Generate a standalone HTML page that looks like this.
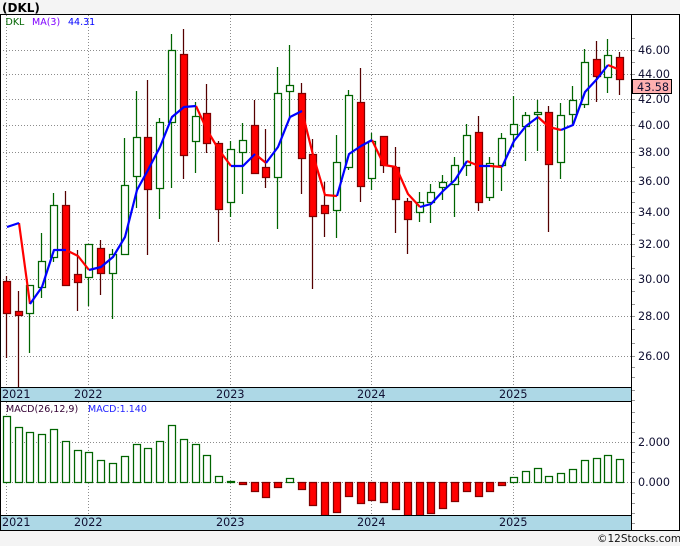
<!DOCTYPE html>
<html><head><meta charset="utf-8"><style>
html,body{margin:0;padding:0;background:#f4f4f4}
svg{display:block}
text{font-family:"DejaVu Sans",sans-serif;font-size:11.2px;fill:#111133}
</style></head><body>
<svg width="680" height="546" viewBox="0 0 680 546" xmlns="http://www.w3.org/2000/svg">
<rect width="680" height="546" fill="#f4f4f4"/>
<rect x="0" y="14" width="680" height="517" fill="#fff"/>
<text x="2" y="12" style="font-weight:bold;font-size:12px;fill:#000">(DKL)</text>
<path shape-rendering="crispEdges" fill="none" stroke="#8c8c8c" stroke-dasharray="1 2" d="M0 50.5H631M0 74.5H631M0 99.5H631M0 125.5H631M0 152.5H631M0 181.5H631M0 212.5H631M0 244.5H631M0 279.5H631M0 316.5H631M0 356.5H631M6.5 15V387M88.5 15V387M230.5 15V387M371.5 15V387M513.5 15V387M0 442.5H631M0 482.5H631M6.5 402V515M88.5 402V515M230.5 402V515M371.5 402V515M513.5 402V515"/>
<g stroke-width="1.25">
<path fill="none" stroke="#006400" d="M29.5 285V353M41.5 233V298M53.5 193V262M88.5 244V306M112.5 249V319M124.5 138V254M136.5 91V208M159.5 118V219M171.5 34V188M195.5 102V173M230.5 141V217M242.5 123V194M277.5 67V229M289.5 45V117M336.5 135V238M348.5 90V170M371.5 133V190M419.5 192V222M430.5 184V223M442.5 175V200M454.5 157V217M466.5 124V176M489.5 157V201M501.5 133V191M513.5 96V147M525.5 112V161M537.5 100V151M560.5 103V179M572.5 86V124M584.5 49V108M607.5 39V93"/>
<path fill="none" stroke="#550000" d="M6.5 276V358M18.5 291V387M65.5 191V285M77.5 250V311M100.5 240V295M147.5 80V255M183.5 29V179M206.5 84V153M218.5 141V242M254.5 100V173M265.5 129V188M301.5 83V194M312.5 139V289M324.5 182V237M360.5 68V202M383.5 136V173M395.5 147V233M407.5 198V254M478.5 116V211M548.5 106V232M596.5 41V102M619.5 52V95"/>
<path fill="#fff" stroke="#006400" d="M26.5 285.5h7V313.5h-7zM38.5 261.5h7V287.5h-7zM50.5 205.5h7V257.5h-7zM85.5 244.5h7V277.5h-7zM109.5 254.5h7V273.5h-7zM121.5 185.5h7V254.5h-7zM133.5 137.5h7V176.5h-7zM156.5 122.5h7V188.5h-7zM168.5 50.5h7V122.5h-7zM192.5 116.5h7V141.5h-7zM227.5 149.5h7V202.5h-7zM239.5 140.5h7V152.5h-7zM274.5 93.5h7V177.5h-7zM286.5 85.5h7V91.5h-7zM333.5 162.5h7V210.5h-7zM345.5 95.5h7V167.5h-7zM368.5 141.5h7V178.5h-7zM416.5 202.5h7V212.5h-7zM427.5 192.5h7V202.5h-7zM439.5 182.5h7V187.5h-7zM451.5 165.5h7V184.5h-7zM463.5 135.5h7V165.5h-7zM486.5 163.5h7V197.5h-7zM498.5 138.5h7V165.5h-7zM510.5 124.5h7V134.5h-7zM522.5 115.5h7V126.5h-7zM534.5 112.5h7V114.5h-7zM557.5 115.5h7V162.5h-7zM569.5 100.5h7V114.5h-7zM581.5 62.5h7V104.5h-7zM604.5 55.5h7V77.5h-7z"/>
<path fill="#f00" stroke="#800000" d="M3.5 281.5h7V313.5h-7zM15.5 311.5h7V315.5h-7zM62.5 205.5h7V285.5h-7zM74.5 274.5h7V282.5h-7zM97.5 248.5h7V273.5h-7zM144.5 137.5h7V189.5h-7zM180.5 54.5h7V155.5h-7zM203.5 113.5h7V143.5h-7zM215.5 143.5h7V209.5h-7zM251.5 125.5h7V173.5h-7zM262.5 167.5h7V177.5h-7zM298.5 93.5h7V158.5h-7zM309.5 154.5h7V216.5h-7zM321.5 205.5h7V213.5h-7zM357.5 102.5h7V186.5h-7zM380.5 136.5h7V165.5h-7zM392.5 167.5h7V199.5h-7zM404.5 201.5h7V219.5h-7zM475.5 132.5h7V202.5h-7zM545.5 112.5h7V164.5h-7zM593.5 59.5h7V76.5h-7zM616.5 57.5h7V79.5h-7z"/>
</g>
<path fill="none" stroke="#f00" stroke-width="2.2" stroke-linejoin="round" d="M19 223L30 304M66 250L78 256L89 270M196 106L207 130L219 150L231 166M255 154L266 163M302 111L313 155L325 195L337 196M372 140L384 165L396 167L408 194L420 207M467 161L479 166M490 166L502 167M538 117L549 127L561 130M608 65L620 70"/>
<path fill="none" stroke="#00f" stroke-width="2.2" stroke-linejoin="round" d="M7 227L19 223M30 304L42 287L54 250L66 250M89 270L101 267L113 257L125 237L137 190L148 170L160 147L172 117L184 107L196 106M231 166L243 166L255 154M266 163L278 147L290 117L302 111M337 196L349 154L361 146L372 140M420 207L431 204L443 191L455 180L467 161M479 166L490 166M502 167L514 141L526 126L538 117M561 130L573 125L585 92L597 79L608 65"/>
<g stroke-width="1.25">
<path fill="#fff" stroke="#006400" d="M3.5 416.5h7V482.5h-7zM15.5 427.5h7V482.5h-7zM26.5 432.5h7V482.5h-7zM38.5 434.5h7V482.5h-7zM50.5 429.5h7V482.5h-7zM62.5 441.5h7V482.5h-7zM74.5 450.5h7V482.5h-7zM85.5 452.5h7V482.5h-7zM97.5 460.5h7V482.5h-7zM109.5 463.5h7V482.5h-7zM121.5 456.5h7V482.5h-7zM133.5 444.5h7V482.5h-7zM144.5 448.5h7V482.5h-7zM156.5 441.5h7V482.5h-7zM168.5 425.5h7V482.5h-7zM180.5 439.5h7V482.5h-7zM192.5 444.5h7V482.5h-7zM203.5 455.5h7V482.5h-7zM215.5 476.5h7V482.5h-7zM227.5 481.5h7V482.5h-7zM286.5 478.5h7V482.5h-7zM510.5 477.5h7V482.5h-7zM522.5 471.5h7V482.5h-7zM534.5 468.5h7V482.5h-7zM545.5 476.5h7V482.5h-7zM557.5 473.5h7V482.5h-7zM569.5 469.5h7V482.5h-7zM581.5 460.5h7V482.5h-7zM593.5 458.5h7V482.5h-7zM604.5 455.5h7V482.5h-7zM616.5 459.5h7V482.5h-7z"/>
<path fill="#f00" stroke="#800000" d="M239.5 482.5h7V484.5h-7zM251.5 482.5h7V491.5h-7zM262.5 482.5h7V497.5h-7zM274.5 482.5h7V487.5h-7zM298.5 482.5h7V489.5h-7zM309.5 482.5h7V505.5h-7zM321.5 482.5h7V515.5h-7zM333.5 482.5h7V512.5h-7zM345.5 482.5h7V496.5h-7zM357.5 482.5h7V503.5h-7zM368.5 482.5h7V500.5h-7zM380.5 482.5h7V502.5h-7zM392.5 482.5h7V509.5h-7zM404.5 482.5h7V515.5h-7zM416.5 482.5h7V515.5h-7zM427.5 482.5h7V513.5h-7zM439.5 482.5h7V508.5h-7zM451.5 482.5h7V501.5h-7zM463.5 482.5h7V491.5h-7zM475.5 482.5h7V496.5h-7zM486.5 482.5h7V491.5h-7zM498.5 482.5h7V485.5h-7z"/>
</g>
<g shape-rendering="crispEdges">
<rect x="0" y="387" width="631" height="14" fill="#add8e6"/>
<rect x="0" y="515" width="631" height="15" fill="#add8e6"/>
<path fill="none" stroke="#999" d="M632 38.5h3M632 50.5h3M632 62.5h3M632 74.5h3M632 87.5h3M632 99.5h3M632 112.5h3M632 125.5h3M632 139.5h3M632 152.5h3M632 167.5h3M632 181.5h3M632 192.5h3M632 202.5h3M632 212.5h3M632 223.5h3M632 234.5h3M632 244.5h3M632 256.5h3M632 268.5h3M632 279.5h3M632 291.5h3M632 304.5h3M632 316.5h3M632 329.5h3M632 343.5h3M632 356.5h3M632 367.5h3M632 377.5h3M632 390.5h3M632 400.5h3M632 412.5h3M632 422.5h3M632 432.5h3M632 442.5h3M632 452.5h3M632 462.5h3M632 472.5h3M632 482.5h3M632 493.5h3M632 503.5h3M632 513.5h3M632 523.5h3"/>
<path fill="none" stroke="#000" d="M0 14.5H680M0.5 14V531M0 387.5H631M0 401.5H631M0 515.5H631M0 530.5H680M631.5 14V531M679.5 14V531"/>
<rect x="632.5" y="79.5" width="39" height="14" fill="#ffb0b0" stroke="#000"/>
</g>
<text x="638" y="54">46.00</text>
<text x="638" y="78">44.00</text>
<text x="638" y="103">42.00</text>
<text x="638" y="129">40.00</text>
<text x="638" y="156">38.00</text>
<text x="638" y="185">36.00</text>
<text x="638" y="216">34.00</text>
<text x="638" y="248">32.00</text>
<text x="638" y="283">30.00</text>
<text x="638" y="320">28.00</text>
<text x="638" y="360">26.00</text>
<text x="638" y="446">2.000</text>
<text x="638" y="486">0.000</text>
<text x="637" y="91">43.58</text>
<text x="2" y="398">2021</text><text x="74" y="398">2022</text><text x="216" y="398">2023</text><text x="357" y="398">2024</text><text x="499" y="398">2025</text>
<text x="2" y="526">2021</text><text x="74" y="526">2022</text><text x="216" y="526">2023</text><text x="357" y="526">2024</text><text x="499" y="526">2025</text>
<text x="5.5" y="25" style="font-size:9.5px;fill:#006400">DKL</text>
<text x="32" y="25" style="font-size:9.5px;fill:#7f00ff">MA(3)</text>
<text x="68" y="25" style="font-size:9.5px;fill:#0000ff">44.31</text>
<text x="6" y="412" style="font-size:9.5px;fill:#330033">MACD(26,12,9)</text>
<text x="88" y="412" style="font-size:9.5px;fill:#2222ff">MACD:1.140</text>
<text x="597" y="542" style="font-size:10.5px;fill:#111">©12Stocks.com</text>
</svg>
</body></html>
